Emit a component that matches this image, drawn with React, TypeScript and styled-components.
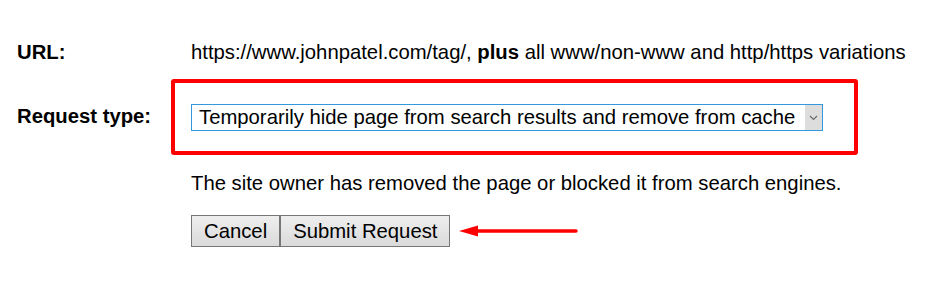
import React from "react";
import styled, { createGlobalStyle } from "styled-components";

const Global = createGlobalStyle`
  html, body { margin: 0; padding: 0; background: #fff; }
  body { font-family: Arial, "Liberation Sans", sans-serif; color: #000; }
`;

const FONT = "20.3px";

const Page = styled.div`
  width: 950px;
  height: 284px;
  box-sizing: border-box;
  padding: 40px 0 0 17px;
  font-size: ${FONT};
  line-height: 24px;
`;

const Row = styled.div<{ $top?: number }>`
  display: grid;
  grid-template-columns: 174px auto;
  align-items: start;
  margin-top: ${(p) => p.$top ?? 0}px;
`;

const Label = styled.div`
  font-weight: bold;
  white-space: nowrap;
`;

const Value = styled.div`
  white-space: nowrap;
`;

const SelectWrap = styled.div`
  position: relative;
  width: 632px;
  height: 27px;
  box-sizing: border-box;
  border: 1px solid #3399dd;
  display: flex;
  align-items: stretch;
  background: #fff;
`;

const Select = styled.select`
  appearance: none;
  -webkit-appearance: none;
  flex: 1;
  border: none;
  outline: none;
  background: transparent;
  font-family: Arial, "Liberation Sans", sans-serif;
  font-size: ${FONT};
  color: #000;
  padding: 0 0 0 7px;
  margin: 0;
  height: 25px;
  line-height: 25px;
`;

const Chevron = styled.div`
  width: 17px;
  background: #dddddd;
  display: flex;
  align-items: center;
  justify-content: center;
`;

const Highlight = styled.div`
  position: absolute;
  top: -26px;
  left: -21px;
  right: -36px;
  bottom: -25px;
  border: 4px solid #ff0000;
  border-radius: 3px;
  pointer-events: none;
`;

const Actions = styled.div`
  display: flex;
  align-items: center;
`;

const Button = styled.button`
  height: 32px;
  box-sizing: border-box;
  padding: 0 12px;
  margin: 0;
  border: 1px solid #767676;
  background: linear-gradient(#eeeeee, #dadada);
  font-family: Arial, "Liberation Sans", sans-serif;
  font-size: ${FONT};
  color: #000;
  border-radius: 0;
`;

const Arrow = styled.svg`
  margin-left: 9px;
  display: block;
`;

export default function App() {
  return (
    <>
      <Global />
      <Page>
        <Row>
          <Label>URL:</Label>
          <Value>
            https://www.johnpatel.com/tag/, <b>plus</b> all www/non-www and http/https variations
          </Value>
        </Row>
        <Row $top={40}>
          <Label>Request type:</Label>
          <SelectWrap>
            <Select defaultValue="hide">
              <option value="hide">Temporarily hide page from search results and remove from cache</option>
            </Select>
            <Chevron>
              <svg width="9" height="6" viewBox="0 0 9 6">
                <path d="M1 1 L4.5 4.5 L8 1" fill="none" stroke="#6a6a6a" strokeWidth="1.2" />
              </svg>
            </Chevron>
            <Highlight />
          </SelectWrap>
        </Row>
        <Row $top={40}>
          <div />
          <Value>The site owner has removed the page or blocked it from search engines.</Value>
        </Row>
        <Row $top={20}>
          <div />
          <Actions>
            <Button>Cancel</Button>
            <Button>Submit Request</Button>
            <Arrow width="120" height="14" viewBox="0 0 120 14">
              <path d="M0 7 L19 1.5 L19 12.5 Z" fill="#ff0000" />
              <line x1="17" y1="7" x2="117" y2="7" stroke="#ff0000" strokeWidth="3.5" strokeLinecap="round" />
            </Arrow>
          </Actions>
        </Row>
      </Page>
    </>
  );
}
